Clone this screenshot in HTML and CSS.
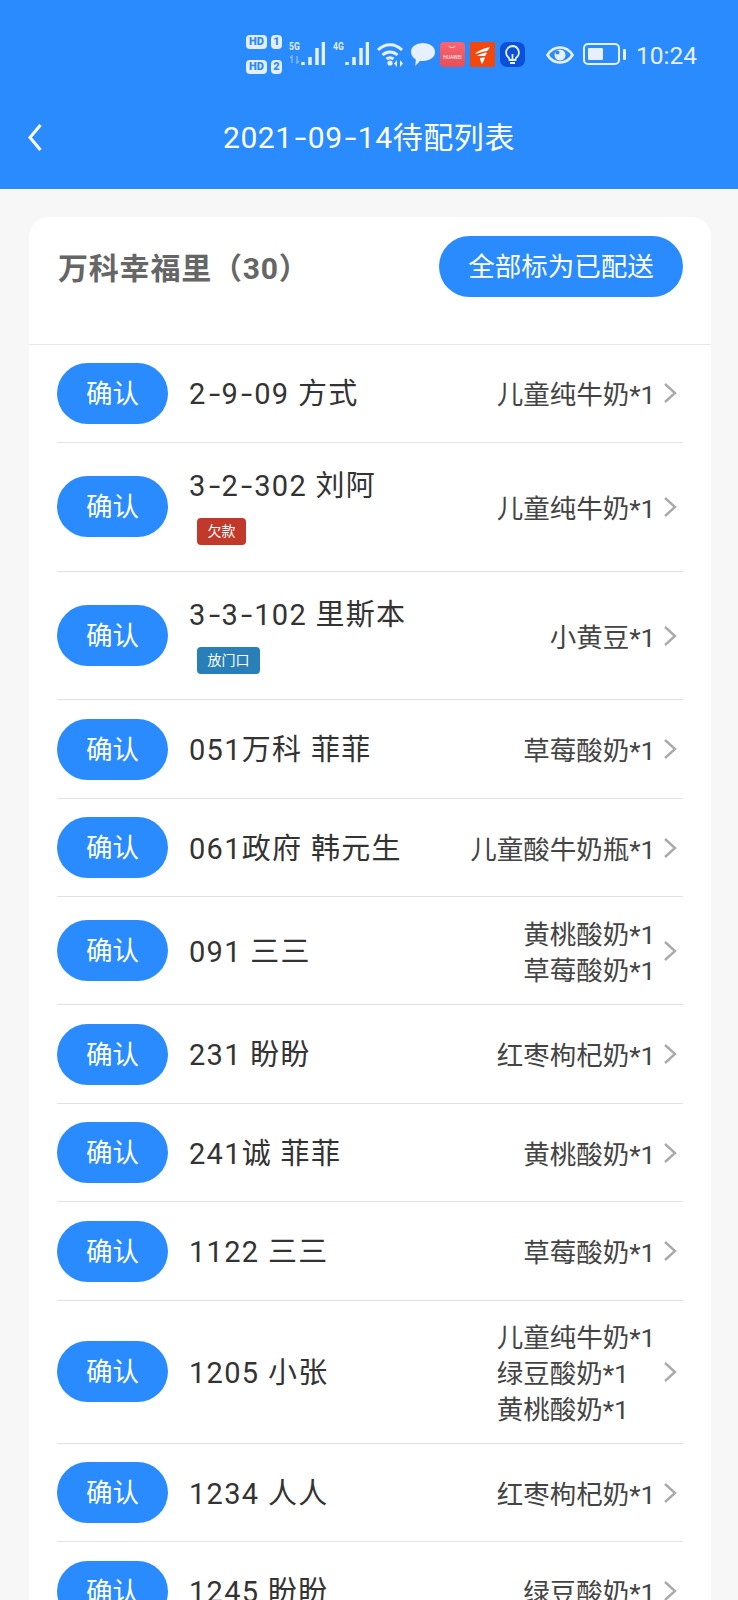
FILE: index.html
```html
<!DOCTYPE html>
<html lang="zh">
<head>
<meta charset="utf-8">
<title>待配列表</title>
<link rel="stylesheet" href="styles.css">
</head>
<body>
<header class="top">
  <div class="status">
    <div class="sims">
      <div class="sim"><span class="hd">HD</span><span class="num">1</span></div>
      <div class="sim"><span class="hd">HD</span><span class="num">2</span></div>
    </div>
    <div class="net">
      <div class="gen-col"><span class="gen">5G</span><svg class="updown" viewBox="0 0 12 9"><path d="M3 8V1L1 3M8 1v7l2-2" /></svg></div>
      <svg class="bars" viewBox="0 0 24 23"><path d="M2 23v-3M9 23v-8M16 23V6M22.500 23V0" /></svg>
    </div>
    <div class="net">
      <div class="gen-col"><span class="gen">4G</span></div>
      <svg class="bars" viewBox="0 0 24 23"><path d="M2 23v-3M9 23v-8M16 23V6M22.500 23V0" /></svg>
    </div>
    <svg class="wifi" viewBox="0 0 27 24"><path d="M1 8c7-7 17-7 24 0M5.500 13c4.500-4 10.500-4 15 0" /><path d="M9.500 17c2-1.500 5-1.500 7 0" /><circle cx="13" cy="21" r="2.600" /><path class="wifi-arrows" d="M20 18l-3 3.500 3 3.500zM23 18l3 3.500-3 3.500z" /></svg>
    <svg class="chat" viewBox="0 0 24 23"><path d="M12 0c6.500 0 12 3.500 12 9s-5.500 9-12 9c-1 0-2 0-3-.3-1 1.500-3 3.800-5 5 .5-1.800.8-4 .8-6.200C2 14.800 0 12.200 0 9 0 3.500 5.500 0 12 0z" /></svg>
    <div class="app app-red">
      <svg class="smile" viewBox="0 0 10 5"><path d="M1 1c1 3 7 3 8 0" /></svg>
      <span class="brand">HUAWEI</span>
    </div>
    <svg class="app app-orange" viewBox="0 0 25 25"><path d="M5 12c2-3 10-6 15-7-1 2-2 3-3 4-4 .5-8 2-12 3zM7 14c3-2 8-3.500 10-3.500-.5 1.500-1 2.500-2 3.500-3 0-5 0-8 0zM10 16c2-.5 4-.5 5-.5-1 3-2 5-3 6.500-1-2-2-4-2-6z" /></svg>
    <svg class="app app-blue" viewBox="0 0 25 25"><path d="M12.500 4a6.500 6.500 0 0 0-4 11.500c.8.700 1 1.500 1 2.500h6c0-1 .2-1.800 1-2.500A6.500 6.500 0 0 0 12.500 4zM10 21h5M12.500 18v-6" /></svg>
    <svg class="eye" viewBox="0 0 28 18"><path class="eye-shape" d="M1.500 9c6-10 19-10 25 0-6 10-19 10-25 0z" /><circle cx="14" cy="9" r="5.500" /><circle class="glint" cx="11.500" cy="6.500" r="2" /></svg>
    <div class="battery"><span class="cell"><span class="level"></span></span><span class="cap"></span></div>
    <span class="clock">10:24</span>
  </div>
  <div class="bar">
    <svg class="back" viewBox="0 0 14 28"><path d="M12.500 2 2 14.500 12.500 27" /></svg>
    <h1 class="page-title">2021<span class="dash">-</span>09<span class="dash">-</span>14待配列表</h1>
  </div>
</header>
<main class="page">
  <section class="card">
    <div class="card-head">
      <h2 class="group">万科幸福里（30）</h2>
      <button class="all">全部标为已配送</button>
    </div>
    <ul class="list">
      <li class="row h98"><button class="ok">确认</button><div class="who"><div class="name">2<span class="dash">-</span>9<span class="dash">-</span>09 方式</div></div><div class="goods"><div>儿童纯牛奶*1</div></div><svg class="chev" viewBox="0 0 14 22"><path d="M2 2l10 9-10 9" /></svg></li>
      <li class="row h129"><button class="ok">确认</button><div class="who"><div class="name">3<span class="dash">-</span>2<span class="dash">-</span>302 刘阿</div><span class="tag tag-red">欠款</span></div><div class="goods"><div>儿童纯牛奶*1</div></div><svg class="chev" viewBox="0 0 14 22"><path d="M2 2l10 9-10 9" /></svg></li>
      <li class="row h129"><button class="ok">确认</button><div class="who"><div class="name">3<span class="dash">-</span>3<span class="dash">-</span>102 里斯本</div><span class="tag tag-blue">放门口</span></div><div class="goods"><div>小黄豆*1</div></div><svg class="chev" viewBox="0 0 14 22"><path d="M2 2l10 9-10 9" /></svg></li>
      <li class="row h98"><button class="ok">确认</button><div class="who"><div class="name">051万科 菲菲</div></div><div class="goods"><div>草莓酸奶*1</div></div><svg class="chev" viewBox="0 0 14 22"><path d="M2 2l10 9-10 9" /></svg></li>
      <li class="row h98"><button class="ok">确认</button><div class="who"><div class="name">061政府 韩元生</div></div><div class="goods"><div>儿童酸牛奶瓶*1</div></div><svg class="chev" viewBox="0 0 14 22"><path d="M2 2l10 9-10 9" /></svg></li>
      <li class="row h108"><button class="ok">确认</button><div class="who"><div class="name">091 三三</div></div><div class="goods"><div>黄桃酸奶*1</div><div>草莓酸奶*1</div></div><svg class="chev" viewBox="0 0 14 22"><path d="M2 2l10 9-10 9" /></svg></li>
      <li class="row h98"><button class="ok">确认</button><div class="who"><div class="name">231 盼盼</div></div><div class="goods"><div>红枣枸杞奶*1</div></div><svg class="chev" viewBox="0 0 14 22"><path d="M2 2l10 9-10 9" /></svg></li>
      <li class="row h98"><button class="ok">确认</button><div class="who"><div class="name">241诚 菲菲</div></div><div class="goods"><div>黄桃酸奶*1</div></div><svg class="chev" viewBox="0 0 14 22"><path d="M2 2l10 9-10 9" /></svg></li>
      <li class="row h98"><button class="ok">确认</button><div class="who"><div class="name">1122 三三</div></div><div class="goods"><div>草莓酸奶*1</div></div><svg class="chev" viewBox="0 0 14 22"><path d="M2 2l10 9-10 9" /></svg></li>
      <li class="row h143"><button class="ok">确认</button><div class="who"><div class="name">1205 小张</div></div><div class="goods"><div>儿童纯牛奶*1</div><div>绿豆酸奶*1</div><div>黄桃酸奶*1</div></div><svg class="chev" viewBox="0 0 14 22"><path d="M2 2l10 9-10 9" /></svg></li>
      <li class="row h98"><button class="ok">确认</button><div class="who"><div class="name">1234 人人</div></div><div class="goods"><div>红枣枸杞奶*1</div></div><svg class="chev" viewBox="0 0 14 22"><path d="M2 2l10 9-10 9" /></svg></li>
      <li class="row h98"><button class="ok">确认</button><div class="who"><div class="name">1245 盼盼</div></div><div class="goods"><div>绿豆酸奶*1</div></div><svg class="chev" viewBox="0 0 14 22"><path d="M2 2l10 9-10 9" /></svg></li>
    </ul>
  </section>
</main>
</body>
</html>
```

FILE: styles.css
```css
* { box-sizing: border-box; }
html, body { margin: 0; height: 1600px; overflow: hidden; }
body {
  background: #f7f7f7;
  color: #333;
  font-family: Roboto, "Noto Sans CJK SC", sans-serif;
}
.top { background: #2a8bff; height: 189px; color: #fff; }
.status {
  height: 110px;
  padding: 35px 41px 0 0;
  display: flex;
  justify-content: flex-end;
  align-items: flex-start;
}
.sims { display: flex; flex-direction: column; gap: 11px; margin-right: 7px; }
.sim { display: flex; gap: 4px; }
.hd, .num {
  background: #e3eeff;
  color: #2a8bff;
  font-size: 11px;
  font-weight: 900;
  line-height: 14px;
  height: 14px;
  border-radius: 4px;
  text-align: center;
}
.hd { width: 21px; }
.num { width: 11px; }
.net { display: flex; align-items: flex-start; margin: 7px 8px 0 0; }
.gen-col { width: 12px; display: flex; flex-direction: column; gap: 3px; }
.gen { font-size: 10px; font-weight: 700; line-height: 10px; color: #e3eeff; transform: scaleX(.85); transform-origin: left; }
.updown { width: 12px; height: 9px; }
.updown path { fill: none; stroke: #7fb8ff; stroke-width: 1.500; }
.bars { width: 24px; height: 23px; }
.bars path { stroke: #e6f0ff; stroke-width: 3.500; fill: none; }
.wifi { width: 27px; height: 24px; margin: 7px 7px 0 0; overflow: visible; }
.wifi path { stroke: #e6f0ff; stroke-width: 3; fill: none; }
.wifi circle { fill: #e6f0ff; }
.wifi .wifi-arrows { fill: #e6f0ff; stroke: none; }
.chat { width: 24px; height: 23px; margin: 8px 5px 0 0; fill: #e6f0ff; }
.app {
  flex: none;
  width: 25px;
  height: 25px;
  margin: 7px 5px 0 0;
  border-radius: 4px;
}
.app-red {
  background: linear-gradient(#fb6470, #e84d58);
  color: #fff;
  display: flex;
  flex-direction: column;
  align-items: center;
  overflow: hidden;
  padding-top: 3px;
}
.smile { width: 8px; height: 4px; }
.smile path { fill: none; stroke: #fff; stroke-width: 1; }
.brand { font-size: 5px; line-height: 6px; margin-top: 5px; white-space: nowrap; }
.app-orange { background: #f2480e; border-radius: 0; fill: #fff; }
.app-blue { background: #0a50d8; border-radius: 7px; margin-right: 21px; }
.app-blue path { fill: none; stroke: #e6f0ff; stroke-width: 1.800; }
.eye { width: 28px; height: 18px; margin: 11px 9px 0 0; }
.eye-shape { fill: none; stroke: #e6f0ff; stroke-width: 2.600; }
.eye circle { fill: #e6f0ff; }
.eye .glint { fill: #2a8bff; }
.battery { display: flex; align-items: center; margin: 8px 10px 0 0; }
.cell {
  width: 37px;
  height: 22px;
  border: 2px solid #e6f0ff;
  border-radius: 5px;
  padding: 3px;
  display: block;
}
.level { display: block; width: 55%; height: 100%; background: #e6f0ff; border-radius: 1px; }
.cap { width: 3px; height: 11px; margin-left: 3px; background: #e6f0ff; border-radius: 1px; }
.clock { font-size: 24.500px; line-height: 28px; margin-top: 7px; color: #e6f0ff; }
.bar {
  height: 56px;
  display: flex;
  align-items: center;
  justify-content: center;
  position: relative;
}
.back {
  position: absolute;
  left: 28px;
  top: 13px;
  width: 14px;
  height: 28px;
}
.back path { fill: none; stroke: #fff; stroke-width: 3; }
.page-title { margin: 0; font-size: 30px; font-weight: 400; line-height: 56px; letter-spacing: .6px; }
.dash {
  display: inline-block;
  width: 15px;
  text-align: center;
  letter-spacing: 0;
  transform: scaleX(1.4);
}
.page { padding: 28px 27px 0 29px; }
.card { background: #fff; border-radius: 20px 20px 0 0; }
.card-head {
  height: 127.500px;
  padding: 19px 28px 0 29px;
  display: flex;
  justify-content: space-between;
  align-items: flex-start;
  border-bottom: 1px solid #e8e8e8;
}
.group {
  margin: 0;
  font-size: 30px;
  font-weight: 700;
  line-height: 65px;
  letter-spacing: .8px;
  color: #666;
}
.all {
  width: 244px;
  height: 61px;
  border: 0;
  border-radius: 31px;
  background: #2a8bff;
  color: #fff;
  font: 400 26.500px/61px Roboto, "Noto Sans CJK SC", sans-serif;
  padding: 0;
}
.list { list-style: none; margin: 0; padding: 0 28px 0 28px; }
.row {
  display: flex;
  align-items: center;
  border-bottom: 1px solid #e2e2e2;
}
.h98 { height: 98.500px; }
.h108 { height: 108px; }
.h129 { height: 128.700px; }
.h143 { height: 143px; }
.ok {
  flex: none;
  width: 111px;
  height: 61px;
  border: 0;
  border-radius: 31px;
  background: #2a8bff;
  color: #fff;
  font: 400 26.500px/62px Roboto, "Noto Sans CJK SC", sans-serif;
  padding: 0;
  margin-right: 21px;
}
.who { flex: 1; min-width: 0; padding-top: 2px; }
.name { font-size: 29px; line-height: 42px; color: #333; letter-spacing: 1.300px; }
.tag {
  display: inline-block;
  margin: 11px 0 6px 8px;
  height: 27px;
  padding: 0 10.500px;
  border-radius: 4px;
  font-size: 14px;
  line-height: 27px;
  color: #fff;
  vertical-align: top;
}
.tag-red { background: #c0392b; }
.tag-blue { background: #2980b9; }
.goods { font-size: 26.500px; line-height: 36px; color: #444; flex: none; padding-top: 4px; }
.row .goods { text-align: right; }
.h143 .goods { text-align: left; }
.chev {
  flex: none;
  width: 14px;
  height: 22px;
  margin-left: 7px;
  margin-right: 6.500px;
}
.chev path { fill: none; stroke: #aaa; stroke-width: 2.400; }
```
